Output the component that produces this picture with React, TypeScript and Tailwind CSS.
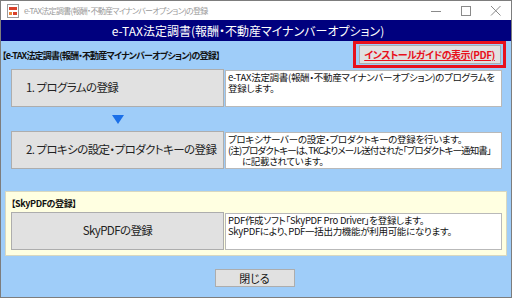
import React from 'react';

const jp = '"Noto Sans CJK JP", "Noto Sans", sans-serif';

function AppIcon() {
  return (
    <svg width="14" height="14" viewBox="0 0 14 14">
      <rect x="1.5" y="0.5" width="11" height="13" fill="#fff" stroke="#9a9a9a" />
      <rect x="3" y="3" width="8" height="3" fill="#d9412b" />
      <rect x="3" y="8" width="3" height="3" fill="#e8873a" />
      <rect x="7" y="8" width="4" height="3" fill="#d9412b" />
    </svg>
  );
}

function WinButtons() {
  return (
    <div className="flex items-center">
      <svg width="30" height="19" viewBox="0 0 30 19">
        <line x1="10" y1="10.5" x2="20" y2="10.5" stroke="#8a8a8a" />
      </svg>
      <svg width="30" height="19" viewBox="0 0 30 19">
        <rect x="10.5" y="5.5" width="9" height="9" fill="none" stroke="#8a8a8a" />
      </svg>
      <svg width="30" height="19" viewBox="0 0 30 19">
        <path d="M10 5 L19.5 14.5 M19.5 5 L10 14.5" stroke="#8a8a8a" />
      </svg>
    </div>
  );
}

function BigButton({ label, left }: { label: string; left?: boolean }) {
  return (
    <div
      className={`flex h-[38px] w-[213px] shrink-0 items-center whitespace-nowrap border border-[#adadad] bg-[#e1e1e1] text-[11.5px] tracking-[-0.6px] text-[#222] ${
        left ? 'justify-start pl-[14px]' : 'justify-center'
      }`}
    >
      {label}
    </div>
  );
}

function Desc({ lines }: { lines: React.ReactNode[] }) {
  return (
    <div className="ml-[1px] mt-[1px] h-[37px] w-[277px] overflow-hidden border border-[#b9b9b9] bg-white px-[2px] pt-[1px] text-[9.5px] leading-[11px] tracking-[-0.3px] text-[#111]">
      {lines.map((l, i) => (
        <div key={i} className="whitespace-nowrap">
          {l}
        </div>
      ))}
    </div>
  );
}

export default function App() {
  return (
    <div
      className="flex h-[298px] w-[512px] flex-col overflow-hidden border border-[#7d7d7d] bg-[#9fcdf9] [font-feature-settings:'palt']"
      style={{ fontFamily: jp }}
    >
      {/* title bar */}
      <div className="flex h-[19px] shrink-0 items-center justify-between bg-white">
        <div className="flex items-center gap-[4px] pl-[5px]">
          <AppIcon />
          <span className="text-[8px] tracking-[-0.7px] text-[#9a9a9a]">
            e-TAX法定調書(報酬・不動産マイナンバーオプション)の登録
          </span>
        </div>
        <WinButtons />
      </div>

      {/* header */}
      <div className="flex h-[21px] shrink-0 items-center justify-center bg-[#00007e] pr-[16px] text-[12px] text-white">
        e-TAX法定調書(報酬・不動産マイナンバーオプション)
      </div>

      {/* body */}
      <div className="flex flex-1 flex-col">
        <div className="flex h-[27px] items-center justify-between pl-[1px] pr-[5px]">
          <span className="mt-[2px] text-[9px] font-bold tracking-[-0.8px] text-[#111]">
            【e-TAX法定調書(報酬・不動産マイナンバーオプション)の登録】
          </span>
          <div className="flex h-[27px] w-[153px] items-center justify-center border-[3px] border-[#e8101c]">
            <div className="flex h-[19px] w-[142px] items-center justify-center border border-[#adadad] bg-[#e1e1e1] text-[10px] font-bold tracking-[-0.5px] text-[#e8101c] underline">
              インストールガイドの表示(PDF)
            </div>
          </div>
        </div>

        <div className="mt-[1px] flex pl-[10px]">
          <BigButton label="1. プログラムの登録" left />
          <Desc
            lines={[
              'e-TAX法定調書(報酬・不動産マイナンバーオプション)のプログラムを',
              '登録します。',
            ]}
          />
        </div>

        <div className="flex h-[24px] w-[233px] items-center justify-center">
          <svg width="12" height="9" viewBox="0 0 12 9">
            <path d="M0 0 H12 L6 9 Z" fill="#1b6fe8" />
          </svg>
        </div>

        <div className="flex pl-[10px]">
          <BigButton label="2. プロキシの設定・プロダクトキーの登録" left />
          <Desc
            lines={[
              'プロキシサーバーの設定・プロダクトキーの登録を行います。',
              <span className="tracking-[-0.9px]">
                (注)プロダクトキーは、TKCよりメール送付された「プロダクトキー通知書」
              </span>,
              <span className="pl-[14px]">に記載されています。</span>,
            ]}
          />
        </div>

        <div className="mx-[4px] mt-[22px] flex h-[65px] flex-col border border-[#d8d8c0] bg-[#ffffe1] pl-[5px]">
          <span className="mt-[5px] h-[15px] text-[9px] font-bold tracking-[-0.4px] text-[#111]">
            【SkyPDFの登録】
          </span>
          <div className="flex">
            <BigButton label="SkyPDFの登録" />
            <Desc
              lines={[
                'PDF作成ソフト「SkyPDF Pro Driver」を登録します。',
                'SkyPDFにより、PDF一括出力機能が利用可能になります。',
              ]}
            />
          </div>
        </div>

        <div className="mt-[13px] flex justify-center pr-[2px]">
          <div className="ml-[-1px] flex h-[18px] w-[80px] items-center justify-center border border-[#adadad] bg-[#e1e1e1] text-[11px] text-[#111]">
            閉じる
          </div>
        </div>
      </div>
    </div>
  );
}
